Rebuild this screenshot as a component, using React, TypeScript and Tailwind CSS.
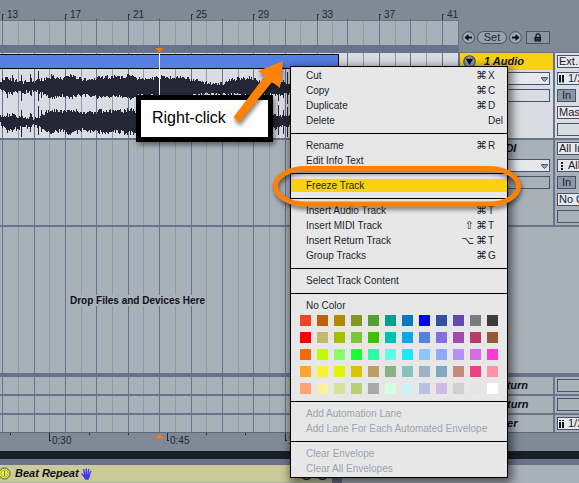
import React from "react";

const MAJOR = [2, 34, 65, 96, 128, 159, 191, 222, 253, 285, 317, 347, 379, 410, 442];
const MINOR = [18, 49, 81, 112, 143, 175, 206, 238, 269, 300, 332, 363, 395, 426];

const BARS = [13, 17, 21, 25, 29, 33, 37, 41];

function Grid() {
  return (
    <svg className="absolute inset-0 h-full w-full" aria-hidden="true">
      {MINOR.map((x) => (
        <rect key={x} x={x} y="0" width="1" height="100%" fill="#919ba5" />
      ))}
      {MAJOR.map((x) => (
        <rect key={x} x={x} y="0" width="1" height="100%" fill="#68748f" />
      ))}
    </svg>
  );
}

// x, top and bottom of the upper channel, top and bottom of the lower one
const ENVELOPE = [
  [0, 12, 20, 47, 55],
  [6, 10, 24, 46, 60],
  [14, 11, 24, 47, 60],
  [24, 13, 23, 48, 58],
  [34, 12, 22, 49, 57],
  [40, 12, 23, 47, 58],
  [46, 9, 26, 43, 61],
  [52, 7, 29, 41, 64],
  [60, 9, 27, 43, 62],
  [70, 7, 29, 41, 64],
  [84, 10, 26, 44, 61],
  [100, 8, 28, 42, 63],
  [116, 8, 28, 42, 63],
  [132, 7, 29, 41, 64],
  [142, 10, 26, 44, 62],
  [160, 8, 28, 42, 63],
  [184, 9, 27, 43, 62],
  [196, 12, 26, 45, 60],
  [212, 14, 25, 46, 60],
  [222, 15, 25, 47, 59],
  [232, 10, 26, 44, 60],
  [250, 9, 27, 45, 60],
  [266, 13, 26, 46, 59],
  [292, 14, 25, 47, 58],
];

const SPIKES: Record<number, number> = { 7: 3, 12: 3, 21: 8, 30: 5, 31: 3, 38: 10, 41: 4, 278: 8, 283: 5, 287: 9 };

function buildWave() {
  let seed = 17;
  const rand = () => {
    seed = (seed * 1103515245 + 12345) % 2147483648;
    return seed / 2147483648;
  };
  let path = "";
  for (let x = 0; x < 292; x++) {
    let i = 0;
    while (i < ENVELOPE.length - 2 && ENVELOPE[i + 1][0] <= x) i++;
    const a = ENVELOPE[i];
    const b = ENVELOPE[i + 1];
    const t = (x - a[0]) / (b[0] - a[0]);
    const at = (k: number) => a[k] + (b[k] - a[k]) * t;
    const s = SPIKES[x] || 0;
    const n = () => Math.round(rand() * 4 - 2);
    const bar = (top: number, bottom: number) => {
      const y1 = Math.round(top) + n() - s;
      const y2 = Math.round(bottom) + n() + s;
      path += `M${x} ${y1}h1V${y2}h-1z`;
    };
    bar(at(1), at(2));
    bar(at(3), at(4));
  }
  return path;
}

const WAVE = buildWave();

function Row({
  height,
  light,
  left,
  title,
  side,
}: {
  height: string;
  light?: boolean;
  left?: React.ReactNode;
  title?: React.ReactNode;
  side?: React.ReactNode;
}) {
  const bg = light ? "bg-[#d9dce2]" : "bg-[#a9b1b8]";
  return (
    <div className={`flex ${height}`}>
      <div className={`relative min-w-0 flex-1 ${bg}`}>
        <Grid />
        {left}
      </div>
      <div className={`w-[95px] shrink-0 border-l-2 border-[#68738c] ${bg}`}>{title}</div>
      <div className={`w-[26px] shrink-0 overflow-hidden border-l-2 border-[#68738c] ${bg}`}>{side}</div>
    </div>
  );
}

function Divider({ height = "h-[2px]" }: { height?: string }) {
  return <div className={`${height} bg-[#68738c]`} />;
}

type MeterKind = "audio" | "midi" | "master";

function Meter({ kind }: { kind: MeterKind }) {
  return (
    <svg className="ml-px h-[10px] w-[6px] shrink-0" viewBox="0 0 6 10" aria-hidden="true">
      {kind === "audio" && (
        <>
          <path d="M0 1h2v7H0zM3 1h2v7H3z" fill="#111827" />
          <path d="M0 8h2v1H0zM3 8h2v1H3z" fill="#16d43a" />
        </>
      )}
      {kind === "midi" && <path d="M2 1h2v2H2zM2 4h2v2H2zM2 7h2v2H2z" fill="#111827" />}
      {kind === "master" && <path d="M0 1h2v1H0zM3 1h2v1H3zM0 3h2v6H0zM3 3h2v6H3z" fill="#111827" />}
    </svg>
  );
}

function Field({ label, value, meter }: { label: string; value?: string; meter?: MeterKind }) {
  return (
    <div
      className={`flex h-[13px] w-20 items-center border border-[#46536a] ${value ? "bg-[#e6e8ec]" : ""}`}
    >
      {meter && <Meter kind={meter} />}
      <select
        aria-label={label}
        className={`h-[11px] min-w-0 flex-1 appearance-none bg-transparent text-[11px] leading-[11px] text-[#1a2030] outline-none ${
          meter ? "pl-[3px]" : "pl-px"
        }`}
      >
        <option>{value || ""}</option>
      </select>
    </div>
  );
}

function Routing({ name, fields }: { name: string; fields: [string, string, MeterKind?][] }) {
  const rows = fields.map(([label, value, meter]) => (
    <Field key={label} label={`${name} ${label}`} value={value} meter={meter} />
  ));
  return (
    <div className="flex flex-col gap-1 pt-[2px] pl-[2px]">
      {rows.slice(0, 2)}
      <button className="h-[13px] w-[19px] border border-[#46536a] bg-[#8d98a6] text-[11px] leading-[11px] text-[#1a2030]">
        In
      </button>
      {rows.slice(2)}
      <Field label={`${name} send`} />
    </div>
  );
}

function TrackHeader({ name, active }: { name: string; active?: boolean }) {
  return (
    <div>
      <div className={`flex h-[17px] items-center gap-2 pl-[3px] ${active ? "bg-[#f8d210]" : ""}`}>
        <button aria-label={`Fold ${name}`} className="h-[13px] w-[13px]">
          <svg viewBox="0 0 13 13" className="h-[13px] w-[13px]">
            <circle cx="6.5" cy="6.5" r="5.7" fill="#8d98a8" stroke="#46536a" strokeWidth="1.2" />
            <path d="M2.8 3.8h7.4L6.5 10z" fill="#0c1020" />
          </svg>
        </button>
        <span className="text-[11px] leading-[13px] font-bold italic">{name}</span>
      </div>
      <div className="flex flex-col gap-1 pt-[2px] pr-[3px] pl-[3px]">
        <div className="relative h-[13px] border border-[#46536a] bg-[#e6e8ec]">
          <select aria-label={`${name} device`} className="block h-[11px] w-full appearance-none text-[10px] leading-[11px]">
            <option></option>
          </select>
          <svg className="absolute top-[4px] right-[1px] h-[5px] w-[7px]" viewBox="0 0 7 5" aria-hidden="true">
            <path d="M0.5 0.5h6v1L3.5 4.5 0.5 1.5z" fill="#9aa6b2" stroke="#46536a" />
          </svg>
        </div>
        <div className="h-[13px] border border-[#46536a]" />
      </div>
    </div>
  );
}

function ReturnName({ name }: { name: string }) {
  return <div className="pl-[22px] text-[11px] leading-[17px] font-bold italic">{name}</div>;
}

function SideField({ label, value }: { label: string; value?: string }) {
  return (
    <div className="pt-[2px] pl-[2px]">
      <Field label={label} value={value} meter={value ? "master" : undefined} />
    </div>
  );
}

const COLORS = [
  ["#ee4524", "#bd6100", "#b08b00", "#85961f", "#539f31", "#0a9c8e", "#007bbe", "#0000ff", "#2f52a2", "#624bad", "#7b7b7b", "#3c3c3c"],
  ["#ff0000", "#bfba69", "#a6be00", "#7ac634", "#3dc300", "#00bfaf", "#10a4ee", "#5480e4", "#886ce4", "#a34bad", "#b73d69", "#965735"],
  ["#f66c03", "#bffb00", "#87ff67", "#1aff2f", "#25ffa8", "#5cffe8", "#19e9ff", "#8bc5ff", "#92a7ff", "#b88dff", "#d86ce4", "#ff39d4"],
  ["#ffa529", "#fff034", "#e3f400", "#dbc300", "#be9d63", "#89b47d", "#88c2ba", "#9bb3c4", "#85a5c2", "#c68b7c", "#f14080", "#ff94a6"],
  ["#ffa374", "#ffeea0", "#d2e498", "#b8d074", "#a9a9a9", "#d4fde1", "#cdf1f8", "#b9c1e3", "#cdbbe4", "#d0d0d0", "#dfe6e5", "#ffffff"],
];

function Item({
  label,
  mods = [],
  keyName,
  off,
  hot,
}: {
  label: string;
  mods?: string[];
  keyName?: string;
  off?: boolean;
  hot?: boolean;
}) {
  return (
    <button
      role="menuitem"
      disabled={off}
      className={`flex w-full items-center pl-[15px] text-left text-[10px] whitespace-nowrap ${
        hot ? "h-[13px] bg-[#f8d210]" : "h-[15px]"
      } ${off ? "text-[#9aa5b0]" : "text-[#1b1f2e]"}`}
    >
      <span className="flex-1">{label}</span>
      {keyName && (
        <>
          <span className="flex gap-[2px] pr-px font-['DejaVu_Sans'] text-[11px] leading-[13px]">
            {mods.map((m) => (
              <span key={m}>{m}</span>
            ))}
          </span>
          <span className="w-[19px]">{keyName}</span>
        </>
      )}
    </button>
  );
}

function Line() {
  return (
    <div role="separator" className="pt-[5px] pb-[4px]">
      <div className="h-px bg-black" />
    </div>
  );
}

function ContextMenu() {
  return (
    <div
      role="menu"
      aria-label="Track"
      className="absolute top-[66px] left-[290px] w-[218px] border border-black bg-[#e7e7e7] py-px shadow-[2px_3px_9px_2px_rgba(0,0,0,0.55)]"
    >
      <Item label="Cut" mods={["⌘"]} keyName="X" />
      <Item label="Copy" mods={["⌘"]} keyName="C" />
      <Item label="Duplicate" mods={["⌘"]} keyName="D" />
      <Item label="Delete" keyName="Del" />
      <Line />
      <Item label="Rename" mods={["⌘"]} keyName="R" />
      <Item label="Edit Info Text" />
      <Line />
      <div className="flex h-[15px] items-center">
        <Item label="Freeze Track" hot />
      </div>
      <Line />
      <Item label="Insert Audio Track" mods={["⌘"]} keyName="T" />
      <Item label="Insert MIDI Track" mods={["⇧", "⌘"]} keyName="T" />
      <Item label="Insert Return Track" mods={["⌥", "⌘"]} keyName="T" />
      <Item label="Group Tracks" mods={["⌘"]} keyName="G" />
      <Line />
      <Item label="Select Track Content" />
      <Line />
      <Item label="No Color" />
      <div className="grid grid-cols-[repeat(12,11px)] gap-[6px] pt-[2px] pb-[2px] pl-[9px]">
        {COLORS.flat().map((c, i) => (
          <button key={i} aria-label={`Color ${i + 1}`} className="h-[11px] w-[11px]" style={{ backgroundColor: c }} />
        ))}
      </div>
      <Line />
      <Item label="Add Automation Lane" off />
      <Item label="Add Lane For Each Automated Envelope" off />
      <Line />
      <Item label="Clear Envelope" off />
      <Item label="Clear All Envelopes" off />
    </div>
  );
}

function RoundArrow({ label, flip }: { label: string; flip?: boolean }) {
  return (
    <button aria-label={label} className="h-[13px] w-[13px]">
      <svg viewBox="0 0 13 13" className={`h-[13px] w-[13px] ${flip ? "rotate-180" : ""}`}>
        <circle cx="6.5" cy="6.5" r="5.8" fill="#a0aab3" stroke="#46536a" />
        <path d="M2.5 6.5L6.5 3v2.5H10v2H6.5V10z" fill="#0c1020" />
      </svg>
    </button>
  );
}

function Header() {
  return (
    <div className="flex">
      <div className="min-w-0 flex-1">
        <div className="relative h-[21px] border-b border-[#68738c] bg-[#808a93]">
          <svg className="absolute inset-0 h-full w-full" aria-hidden="true">
            {MAJOR.map((x, i) =>
              i % 2 === 0 ? (
                <path key={x} d={`M${x} 20V14h2v1h-1v5z`} fill="#2b3340" />
              ) : (
                <rect key={x} x={x} y="19" width="1" height="1" fill="#2b3340" />
              ),
            )}
            {BARS.map((n, i) => (
              <text key={n} x={MAJOR[i * 2] + 5} y="18" fontSize="10" fill="#1f2733">
                {n}
              </text>
            ))}
          </svg>
        </div>
        <div className="relative h-6 bg-[#a9b1b8]">
          <Grid />
        </div>
        <div className="relative h-2 bg-[#68738c]">
          <svg className="absolute top-[3px] left-[155px] h-[5px] w-[9px]" viewBox="0 0 9 5" aria-hidden="true">
            <path d="M0.5 0h8L4.5 4.5z" fill="#ff7a05" />
          </svg>
        </div>
      </div>
      <div className="w-[121px] shrink-0 border-b border-[#68738c] bg-[#808a93] pt-5">
        <div className="flex h-8 items-start gap-[2px] border-l border-[#68738c] pt-[11px] pl-[3px]">
          <RoundArrow label="Previous locator" />
          <button className="h-[13px] w-[30px] rounded-full border border-[#46536a] bg-[#98a2ac] text-[11px] leading-[11px] text-[#1f2733]">
            Set
          </button>
          <RoundArrow label="Next locator" flip />
          <button
            aria-label="Lock envelopes"
            className="ml-[2px] flex h-[13px] w-6 items-center justify-center border border-[#46536a] bg-[#8b959e]"
          >
            <svg viewBox="0 0 8 9" className="h-[9px] w-2" aria-hidden="true">
              <path d="M2 4.500V2.800a2 2 0 0 1 4 0V4" fill="none" stroke="#0c1020" strokeWidth="1.200" />
              <path d="M0.500 4h6.500v4.500H0.500z" fill="#0c1020" />
              <path d="M2 5.500h3.500M2 7h3.500" stroke="#5c6670" strokeWidth="0.600" />
            </svg>
          </button>
        </div>
      </div>
    </div>
  );
}

function TimeRuler() {
  return (
    <div className="relative h-[19px] border-t border-[#5b6780] bg-[#808a93]">
      <svg className="absolute inset-0 h-full w-full" aria-hidden="true">
        {[10, 89, 128, 206, 245].map((x) => (
          <rect key={x} x={x} y="0" width="1" height="2" fill="#1f2733" />
        ))}
        {[
          [49, "0:30"],
          [167, "0:45"],
          [285, "1:00"],
        ].map(([x, t]) => (
          <g key={x}>
            <path d={`M${x} 0h1v7h1v1h-2z`} fill="#1f2733" />
            <text x={Number(x) + 3} y="11" fontSize="10" fill="#1f2733">
              {t}
            </text>
          </g>
        ))}
        <path d="M155.5 5.5h8L159.5 1z" fill="#ff7a05" />
      </svg>
    </div>
  );
}

function DeviceBar() {
  return (
    <div className="flex h-[18px] bg-[#a9b1b8]">
      <div className="relative flex h-[17px] w-[332px] items-center bg-[#cbca98]">
        <button aria-label="Device on" className="-ml-[2px] h-[13px] w-[13px]">
          <svg viewBox="0 0 13 13" className="h-[13px] w-[13px]">
            <circle cx="6.5" cy="6.5" r="5.5" fill="#e9f01a" stroke="#4d565c" />
            <circle cx="6.5" cy="6.5" r="3.5" fill="#f3ee55" stroke="#a5a95a" />
            <path d="M6 4h1v5H6z" fill="#6d765c" />
          </svg>
        </button>
        <span className="pl-1 text-[11px] leading-[15px] font-bold italic">Beat Repeat</span>
        <svg className="ml-[2px] h-3 w-[11px]" viewBox="0 0 11 12" aria-hidden="true">
          <path
            d="M3.8 7L2.8 1.8M5.3 6.5L5.2 0.9M6.9 6.5L7.7 1.5M8 7.5L9.7 3.5M3.600 8.5L1 6"
            stroke="#4338ff"
            strokeWidth="1.5"
            strokeLinecap="round"
          />
          <path d="M3 6.2h5.5L9 8 7.5 11.7H4L2.4 8.5z" fill="#4338ff" />
        </svg>
        <svg className="absolute top-[3px] left-[300px] h-[13px] w-[30px]" viewBox="0 0 30 13" aria-hidden="true">
          <circle cx="6.5" cy="6.5" r="5" fill="#8d98a8" stroke="#26303f" strokeWidth="1.5" />
          <circle cx="22.5" cy="6.5" r="5" fill="#8d98a8" stroke="#26303f" strokeWidth="1.5" />
        </svg>
      </div>
      <div className="w-[10px] bg-[#68738c]" />
    </div>
  );
}

function Annotations() {
  return (
    <>
      <div className="absolute top-[95px] left-[136px] h-[47px] w-[137px] border-[5px] border-black bg-white pl-[11px] text-[16px] leading-[36px] text-black shadow-[2px_3px_5px_rgba(0,0,0,0.45)]">
        Right-click
      </div>
      <svg
        className="pointer-events-none absolute top-0 left-0 h-[220px] w-[540px] drop-shadow-[1px_3px_2px_rgba(0,0,0,0.5)]"
        viewBox="0 0 540 220"
        aria-hidden="true"
      >
        <path d="M283 61L280 88 272 82 239 123 233.500 117 265 76 258 71z" fill="#ff8206" />
        <rect x="275.500" y="168.500" width="243" height="35.500" rx="30" ry="17.700" fill="none" stroke="#ff8206" strokeWidth="5" />
      </svg>
    </>
  );
}

export default function App() {
  return (
    <main className="relative w-full overflow-hidden bg-[#a9b1b8] font-['Liberation_Sans',Arial,sans-serif] text-[#0c1020]">
      <Header />
      <Row
        height="h-[85px]"
        light
        left={
          <div className="relative">
            <div className="mt-px h-[15px] w-[339px] border border-l-0 border-black bg-[#5480e4]" />
            <svg className="block h-[69px] w-full" aria-label="Waveform">
              <path d={WAVE} fill="#242734" />
            </svg>
            <div className="absolute -top-px left-[159px] h-[85px] w-px bg-white" />
          </div>
        }
        title={<TrackHeader name="1 Audio" active />}
        side={
          <Routing
            name="Audio"
            fields={[
              ["input", "Ext. In"],
              ["channel", "1/2", "audio"],
              ["output", "Master"],
            ]}
          />
        }
      />
      <Divider />
      <Row
        height="h-[85px]"
        title={<TrackHeader name="2 MIDI" />}
        side={
          <Routing
            name="MIDI"
            fields={[
              ["input", "All Ins"],
              ["channel", "All", "midi"],
              ["output", "No Output"],
            ]}
          />
        }
      />
      <Divider />
      <div className="flex h-[146px]">
        <div className="relative min-w-0 flex-1 pt-[68px] pl-[69px]">
          <Grid />
          <span className="relative block w-fit bg-[#a9b1b8] px-px text-[10px] leading-[11px] font-bold">
            Drop Files and Devices Here
          </span>
        </div>
        <div className="w-[121px] shrink-0" />
      </div>
      <Divider height="h-1" />
      <Row height="h-[17px]" title={<ReturnName name="A Return" />} side={<SideField label="A send" />} />
      <Divider />
      <Row height="h-[17px]" title={<ReturnName name="B Return" />} side={<SideField label="B send" />} />
      <Divider />
      <Row height="h-[17px]" title={<ReturnName name="Master" />} side={<SideField label="Master out" value="1/2" />} />
      <TimeRuler />
      <div className="h-2 bg-[#1a1e25]" />
      <div className="h-[6px] bg-[#68738c]" />
      <DeviceBar />
      <ContextMenu />
      <Annotations />
    </main>
  );
}
